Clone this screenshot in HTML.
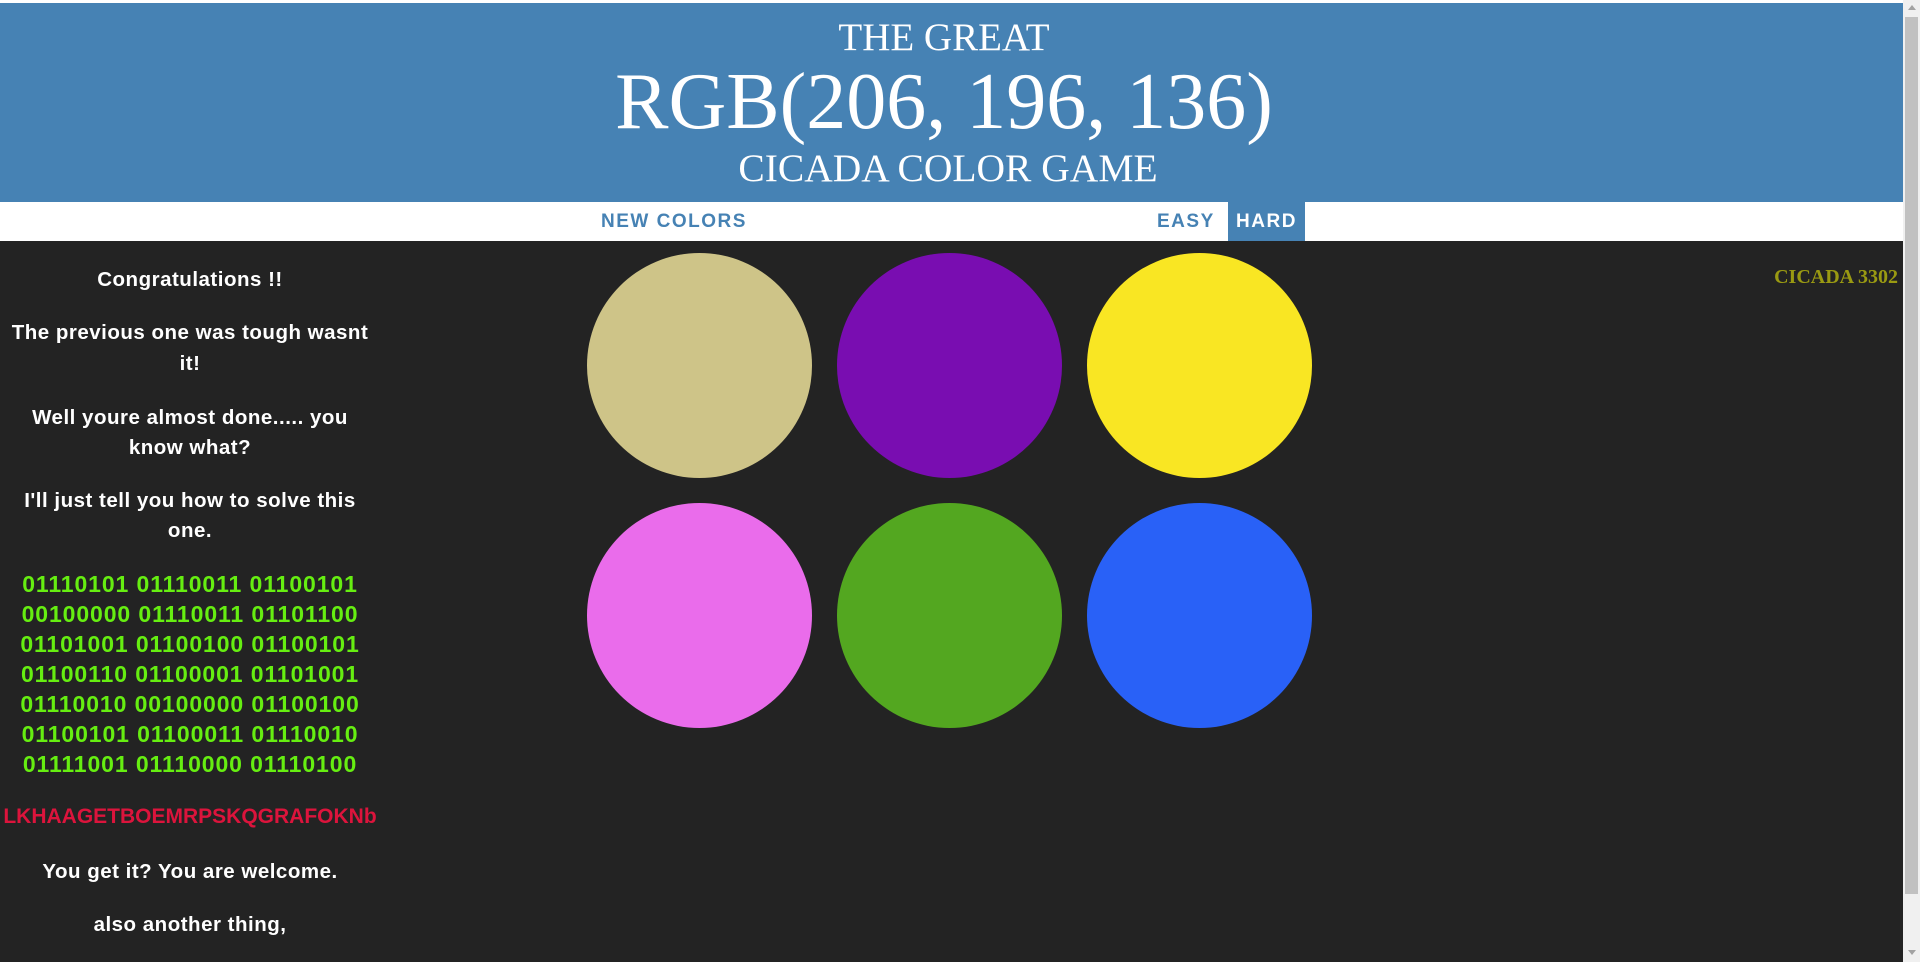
<!DOCTYPE html>
<html><head><meta charset="utf-8"><style>
*{margin:0;padding:0;box-sizing:border-box}
html,body{width:1920px;height:962px;overflow:hidden;background:#232323}
.abs{position:absolute}
#top{left:0;top:0;width:1903px;height:3px;background:#fff}
#head{left:0;top:3px;width:1903px;height:199px;background:#4682b4;color:#fff;font-family:"Liberation Serif",serif}
.ht{position:absolute;left:0;width:1888px;text-align:center;white-space:nowrap;line-height:1}
#nav{left:0;top:202px;width:1903px;height:39px;background:#fff;font-family:"Liberation Sans",sans-serif;font-weight:bold;font-size:19px;letter-spacing:1.5px;color:#4682b4}
#nav span{position:absolute;top:0;line-height:39px}
#hard{left:1228px;width:77px;background:#4682b4;color:#fff;text-align:center}
#left{left:0;top:241px;width:380px;font-family:"Liberation Sans",sans-serif;font-weight:bold;color:#fff;font-size:20.5px;letter-spacing:0.5px;text-align:center}
.l{position:absolute;left:0;width:380px;text-align:center;line-height:30px;white-space:nowrap}
.b{color:#66ee11;letter-spacing:0.9px;font-size:23px}
.c{position:absolute;width:225px;height:225px;border-radius:50%}
#scroll{left:1903px;top:0;width:17px;height:962px;background:#f0f0f0}
#thumb{left:1905px;top:17px;width:13px;height:877px;background:#c1c1c1}
</style></head><body>
<div class="abs" id="top"></div>
<div class="abs" id="head">
 <div class="ht" style="top:15px;font-size:39px">THE GREAT</div>
 <div class="ht" style="top:59px;font-size:80px">RGB(206, 196, 136)</div>
 <div class="ht" style="top:146px;font-size:39.5px;padding-left:8px">CICADA COLOR GAME</div>
</div>
<div class="abs" id="nav">
 <span style="left:601px">NEW COLORS</span>
 <span style="left:1157px">EASY</span>
 <span id="hard">HARD</span>
</div>
<div class="abs" id="left">
 <div class="l" style="top:24px">Congratulations !!</div>
 <div class="l" style="top:77px">The previous one was tough wasnt</div>
 <div class="l" style="top:108px">it!</div>
 <div class="l" style="top:162px">Well youre almost done..... you</div>
 <div class="l" style="top:192px">know what?</div>
 <div class="l" style="top:245px">I'll just tell you how to solve this</div>
 <div class="l" style="top:275px">one.</div>
 <div class="l b" style="top:328px">01110101 01110011 01100101</div>
 <div class="l b" style="top:358px">00100000 01110011 01101100</div>
 <div class="l b" style="top:388px">01101001 01100100 01100101</div>
 <div class="l b" style="top:418px">01100110 01100001 01101001</div>
 <div class="l b" style="top:448px">01110010 00100000 01100100</div>
 <div class="l b" style="top:478px">01100101 01100011 01110010</div>
 <div class="l b" style="top:508px">01111001 01110000 01110100</div>
 <div class="l" style="top:561px;color:#dc143c;letter-spacing:0;font-size:21px">LKHAAGETBOEMRPSKQGRAFOKNb</div>
 <div class="l" style="top:616px">You get it? You are welcome.</div>
 <div class="l" style="top:669px">also another thing,</div>
</div>
<div class="c" style="left:587px;top:253px;background:rgb(206,196,136)"></div>
<div class="c" style="left:837px;top:253px;background:#790db1"></div>
<div class="c" style="left:1087px;top:253px;background:#f9e623"></div>
<div class="c" style="left:587px;top:503px;background:#ea6ceb"></div>
<div class="c" style="left:837px;top:503px;background:#53a720"></div>
<div class="c" style="left:1087px;top:503px;background:#2961f7"></div>
<div class="abs" style="left:1760px;top:266px;width:138px;text-align:right;font-family:'Liberation Serif',serif;font-weight:bold;font-size:20px;color:#9a9a12;white-space:nowrap">CICADA 3302</div>
<div class="abs" id="scroll"></div>
<div class="abs" id="thumb"></div>
<div class="abs" style="left:1908px;top:5px;width:0;height:0;border-left:4px solid transparent;border-right:4px solid transparent;border-bottom:5px solid #a3a3a3"></div>
<div class="abs" style="left:1908px;top:950px;width:0;height:0;border-left:4px solid transparent;border-right:4px solid transparent;border-top:5px solid #a3a3a3"></div>
</body></html>
